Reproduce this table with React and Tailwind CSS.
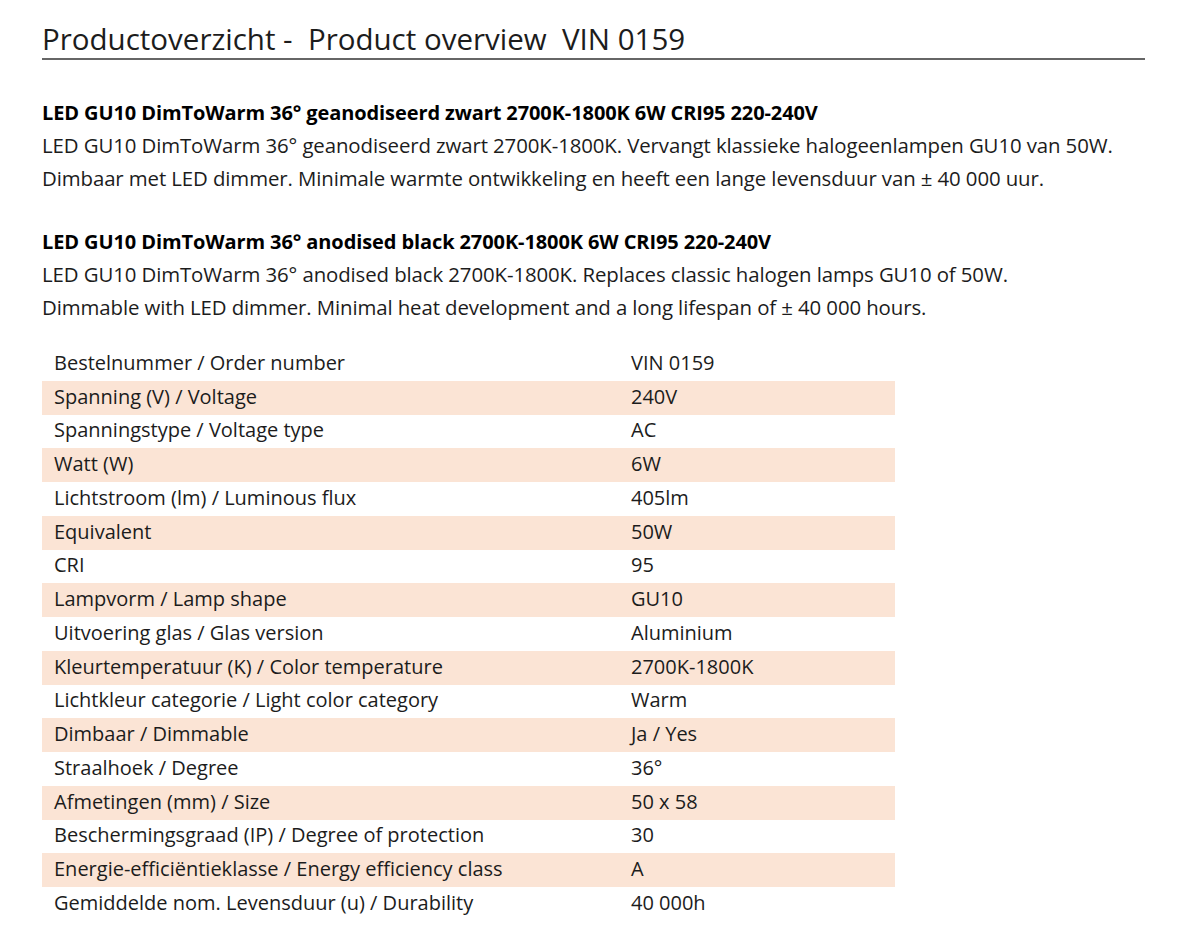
import React from "react";

// Spec rows: [label, value]
const specs = [
  ["Bestelnummer / Order number", "VIN 0159"],
  ["Spanning (V) / Voltage", "240V"],
  ["Spanningstype / Voltage type", "AC"],
  ["Watt (W)", "6W"],
  ["Lichtstroom (lm) / Luminous flux", "405lm"],
  ["Equivalent", "50W"],
  ["CRI", "95"],
  ["Lampvorm / Lamp shape", "GU10"],
  ["Uitvoering glas / Glas version", "Aluminium"],
  ["Kleurtemperatuur (K) / Color temperature", "2700K-1800K"],
  ["Lichtkleur categorie / Light color category", "Warm"],
  ["Dimbaar / Dimmable", "Ja / Yes"],
  ["Straalhoek / Degree", "36°"],
  ["Afmetingen (mm) / Size", "50 x 58"],
  ["Beschermingsgraad (IP) / Degree of protection", "30"],
  ["Energie-efficiëntieklasse / Energy efficiency class", "A"],
  ["Gemiddelde nom. Levensduur (u) / Durability", "40 000h"],
];

const App = () => {
  return (
    <div
      className="min-h-[932px] bg-white pl-[42px] pr-[55px] pt-[21px] text-[#1c1c1c]"
      style={{ fontFamily: "'Open Sans', Lato, sans-serif" }}
    >
      {/* Title */}
      <h1 className="border-b-2 border-[#666] pb-[2px] text-[29.5px] leading-[35px] whitespace-pre">
        {"Productoverzicht -  Product overview  VIN 0159"}
      </h1>

      {/* Dutch description */}
      <div className="mt-[37px]">
        <h2 className="text-[20px] font-bold leading-[32px] text-black tracking-[-0.1px]">
          LED GU10 DimToWarm 36° geanodiseerd zwart 2700K-1800K 6W CRI95 220-240V
        </h2>
        <p className="text-[20.4px] leading-[32.5px] tracking-[-0.1px]">
          LED GU10 DimToWarm 36° geanodiseerd zwart 2700K-1800K. Vervangt klassieke halogeenlampen GU10 van 50W.
          <br />
          Dimbaar met LED dimmer. Minimale warmte ontwikkeling en heeft een lange levensduur van ± 40 000 uur.
        </p>
      </div>

      {/* English description */}
      <div className="mt-[32px]">
        <h2 className="text-[20px] font-bold leading-[32px] text-black tracking-[-0.1px]">
          LED GU10 DimToWarm 36° anodised black 2700K-1800K 6W CRI95 220-240V
        </h2>
        <p className="text-[20.4px] leading-[32.5px] tracking-[-0.1px]">
          LED GU10 DimToWarm 36° anodised black 2700K-1800K. Replaces classic halogen lamps GU10 of 50W.
          <br />
          Dimmable with LED dimmer. Minimal heat development and a long lifespan of ± 40 000 hours.
        </p>
      </div>

      {/* Specification table */}
      <div className="mt-[24px] w-[853px]">
        {specs.map(([label, value], i) => (
          <div
            key={label}
            className={`flex h-[33.75px] items-center text-[20px] ${
              i % 2 === 1 ? "bg-[#fbe4d5]" : ""
            }`}
          >
            <div className="w-[589px] pl-[12px] -translate-y-[1px]">{label}</div>
            <div className="-translate-y-[1px]">{value}</div>
          </div>
        ))}
      </div>
    </div>
  );
};

export default App;
